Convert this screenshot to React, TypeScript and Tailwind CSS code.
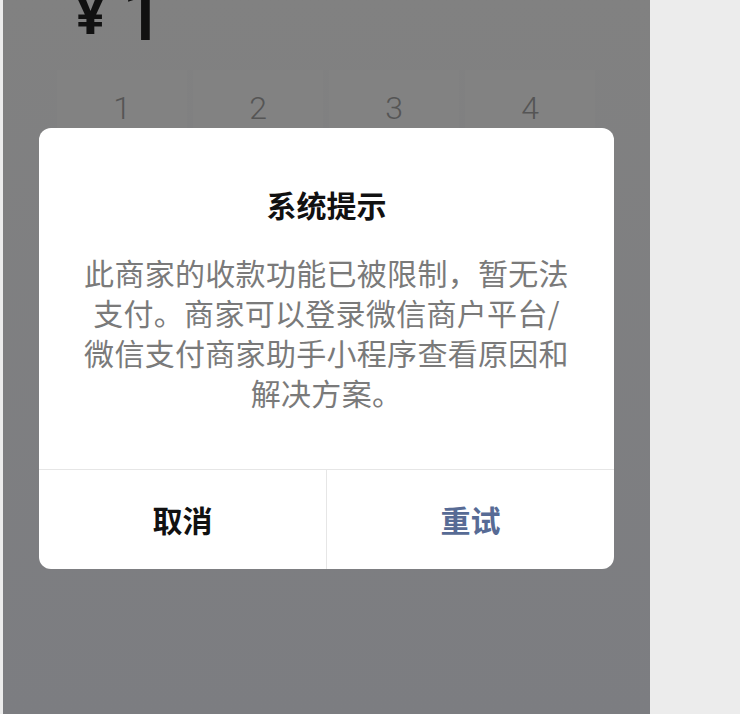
import React from "react";

const cjk = { fontFamily: '"Noto Sans CJK SC", "Noto Sans", sans-serif' };
const latin = { fontFamily: '"Roboto", sans-serif' };

const messageLines = [
  "此商家的收款功能已被限制，暂无法",
  "支付。商家可以登录微信商户平台/",
  "微信支付商家助手小程序查看原因和",
  "解决方案。",
];

export default function App() {
  const keys = ["1", "2", "3", "4"];
  return (
    <div className="w-[740px] h-[714px] bg-[#ececec] flex pl-[3px]" style={cjk}>
      <div className="relative w-[647px] h-full bg-gradient-to-b from-[#818181] to-[#7c7d81] overflow-hidden">
        {/* amount */}
        <div className="flex items-end pl-[73px] h-[44px] overflow-hidden">
          <span className="text-[54px] leading-none font-bold text-[#111] mb-[1px]" style={latin}>
            ¥
          </span>
          <span className="ml-[17px] text-[74px] leading-[0.78] font-medium text-[#111]" style={latin}>
            1
          </span>
        </div>
        {/* keypad */}
        <div className="grid grid-cols-4 gap-[6px] pl-[54px] pr-[55px] mt-[26px]">
          {keys.map((k) => (
            <div key={k} className="h-[70px] bg-[#828282] flex justify-center pt-[18px]">
              <span className="text-[32px] leading-[40px] font-light text-[#555]" style={latin}>
                {k}
              </span>
            </div>
          ))}
        </div>

        {/* dialog */}
        <div className="absolute left-[36px] top-[128px] w-[575px] bg-white rounded-[12px] overflow-hidden">
          <div className="pt-[56px] pb-[57px] px-[40px] flex flex-col items-center">
            <div className="text-[30px] leading-[40px] font-bold text-[#111]">系统提示</div>
            <p className="mt-[28px] text-[30px] leading-[40px] tracking-[0.3px] text-[#7a7a7a] text-center">
              {messageLines.map((line) => (
                <span key={line} className="block whitespace-nowrap">
                  {line}
                </span>
              ))}
            </p>
          </div>
          <div className="flex h-[100px] border-t border-[#e6e6e6]">
            <div className="flex-1 flex items-center justify-center text-[30px] font-bold text-[#111] border-r border-[#e6e6e6]">
              取消
            </div>
            <div className="flex-1 flex items-center justify-center text-[30px] font-bold text-[#576b95]">
              重试
            </div>
          </div>
        </div>
      </div>
    </div>
  );
}
